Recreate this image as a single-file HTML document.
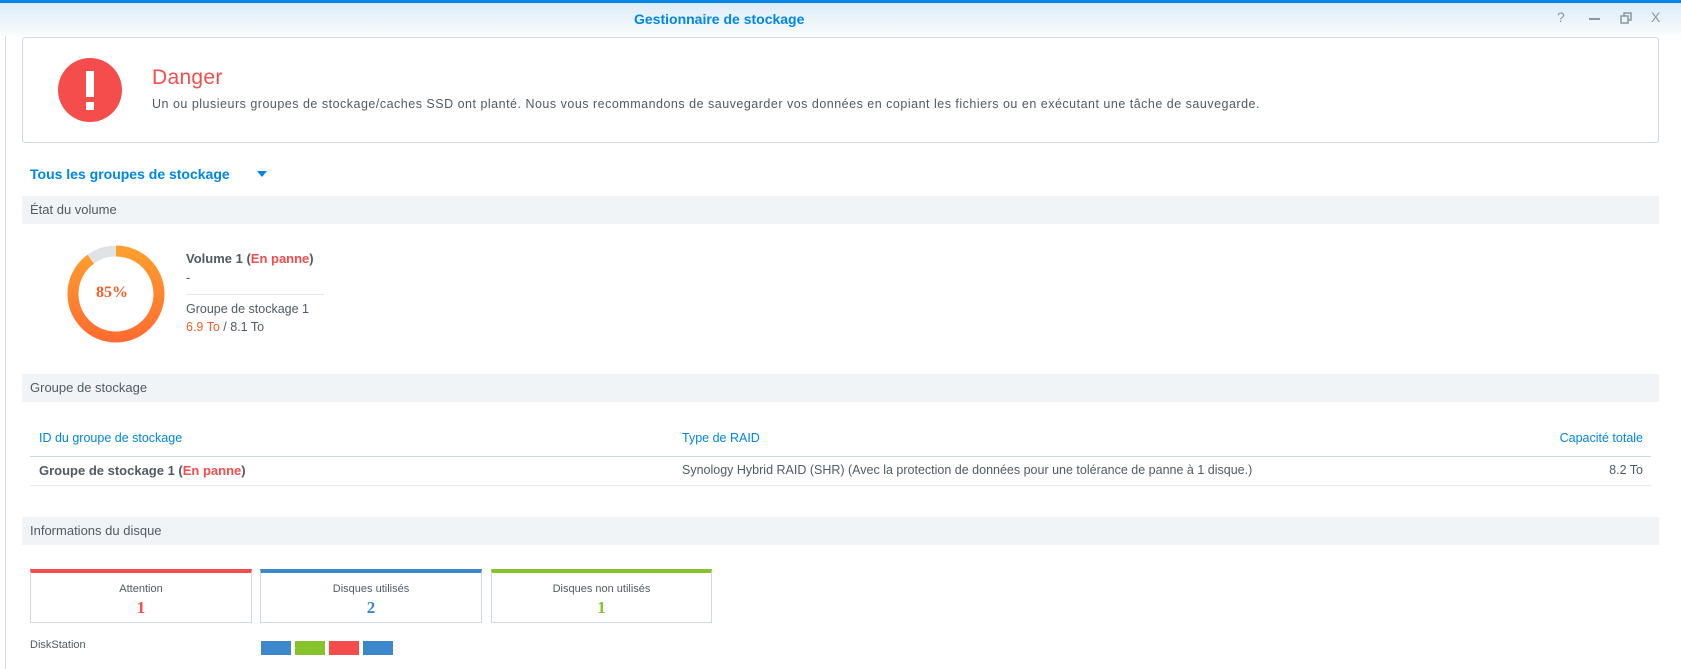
<!DOCTYPE html>
<html><head><meta charset="utf-8"><style>
*{margin:0;padding:0;box-sizing:border-box}
body{width:1681px;height:669px;overflow:hidden;background:#fff;font-family:"Liberation Sans",sans-serif;color:#505a64;position:relative;font-size:13px}
.a{position:absolute;white-space:nowrap}
.tb{position:absolute;left:0;top:0;width:1681px;height:36px;background:linear-gradient(#dcebf8,#fafcfe);border-top:3px solid #0086e5}
.sec{position:absolute;left:22px;width:1637px;height:28px;background:#f1f4f7;font-size:13px;line-height:28px;padding-left:8px;color:#505a64}
.card{position:absolute;top:569px;height:54px;border:1px solid #d0d9e2;text-align:center}
.card .l{font-size:11px;margin-top:10px;color:#505a64}
.card .n{font-family:"Liberation Serif",serif;font-weight:bold;font-size:17px;margin-top:3px}
.sq{position:absolute;top:641px;width:30px;height:14px}
</style></head><body>
<div class="tb"></div>
<div class="a" style="left:634px;top:11px;font-size:14px;font-weight:bold;color:#0086e5">Gestionnaire de stockage</div>
<div class="a" style="left:1557px;top:9px;font-size:14px;color:#8a96a0">?</div>
<div class="a" style="left:1589px;top:18px;width:11px;height:2px;background:#8a96a0"></div>
<svg class="a" style="left:1620px;top:12px" width="12" height="12"><rect x="1" y="4" width="7" height="7" fill="none" stroke="#8a96a0" stroke-width="1.5"/><path d="M4 4V1h7v7H8" fill="none" stroke="#8a96a0" stroke-width="1.5"/></svg>
<div class="a" style="left:1651px;top:9px;font-size:14px;color:#8a96a0">X</div>
<div class="a" style="left:5px;top:36px;width:1px;height:633px;background:#d5dbe1"></div>
<div class="a" style="left:22px;top:37px;width:1637px;height:106px;border:1px solid #d0d9e2;border-radius:3px"></div>
<div class="a" style="left:58px;top:58px;width:64px;height:64px;border-radius:50%;background:#f54c4c"></div>
<div class="a" style="left:86px;top:71px;width:8px;height:26px;background:#fff"></div>
<div class="a" style="left:86px;top:102px;width:8px;height:8px;background:#fff"></div>
<div class="a" style="left:152px;top:66px;font-size:21px;color:#f54c4c;letter-spacing:0.3px">Danger</div>
<div class="a" style="left:152px;top:97px;font-size:12.5px;color:#505a64;letter-spacing:0.5px">Un ou plusieurs groupes de stockage/caches SSD ont planté. Nous vous recommandons de sauvegarder vos données en copiant les fichiers ou en exécutant une tâche de sauvegarde.</div>
<div class="a" style="left:30px;top:166px;font-size:14px;font-weight:bold;color:#0086e5">Tous les groupes de stockage</div>
<div class="a" style="left:257px;top:171px;width:0;height:0;border-left:5px solid transparent;border-right:5px solid transparent;border-top:6px solid #0086e5"></div>
<div class="sec" style="top:196px">État du volume</div>
<svg class="a" style="left:66px;top:244px" width="100" height="100">
<defs><linearGradient id="g" gradientUnits="userSpaceOnUse" x1="50" y1="0" x2="50" y2="100"><stop offset="0" stop-color="#ffa22e"/><stop offset="1" stop-color="#ff6a30"/></linearGradient></defs>
<circle cx="50" cy="50" r="43" fill="none" stroke="#e0e3e6" stroke-width="11"/>
<path d="M50 7 A43 43 0 1 1 24.7 15.2" fill="none" stroke="url(#g)" stroke-width="11"/>
</svg>
<div class="a" style="left:96px;top:284px;font-family:'Liberation Serif',serif;font-weight:bold;font-size:16px;color:#f0602a">85%</div>
<div class="a" style="left:186px;top:251px;font-weight:bold;font-size:13px;color:#505a64">Volume 1 (<span style="color:#f54c4c">En panne</span>)</div>
<div class="a" style="left:186px;top:270px;font-size:13px">-</div>
<div class="a" style="left:186px;top:294px;width:138px;height:1px;background:#e3e7eb"></div>
<div class="a" style="left:186px;top:302px;font-size:12.5px">Groupe de stockage 1</div>
<div class="a" style="left:186px;top:320px;font-size:12.5px"><span style="color:#f0602a">6.9 To</span> / 8.1 To</div>
<div class="sec" style="top:374px">Groupe de stockage</div>
<div class="a" style="left:39px;top:431px;font-size:12.5px;color:#0086e5">ID du groupe de stockage</div>
<div class="a" style="left:682px;top:431px;font-size:12.5px;color:#0086e5">Type de RAID</div>
<div class="a" style="left:1555px;top:431px;font-size:12.5px;color:#0086e5;width:88px;text-align:right">Capacité totale</div>
<div class="a" style="left:30px;top:456px;width:1621px;height:1px;background:#d0d9e2"></div>
<div class="a" style="left:39px;top:463px;font-size:13px;font-weight:bold">Groupe de stockage 1 (<span style="color:#f54c4c">En panne</span>)</div>
<div class="a" style="left:682px;top:463px;font-size:12.5px">Synology Hybrid RAID (SHR) (Avec la protection de données pour une tolérance de panne à 1 disque.)</div>
<div class="a" style="left:1555px;top:463px;font-size:12.5px;width:88px;text-align:right">8.2 To</div>
<div class="a" style="left:30px;top:485px;width:1621px;height:1px;background:#e6eaee"></div>
<div class="sec" style="top:517px">Informations du disque</div>
<div class="card" style="left:30px;width:222px;border-top:4px solid #f54c4c"><div class="l">Attention</div><div class="n" style="color:#f54c4c">1</div></div>
<div class="card" style="left:260px;width:222px;border-top:4px solid #3d87cc"><div class="l">Disques utilisés</div><div class="n" style="color:#3d87cc">2</div></div>
<div class="card" style="left:491px;width:221px;border-top:4px solid #86c22a"><div class="l">Disques non utilisés</div><div class="n" style="color:#86c22a">1</div></div>
<div class="a" style="left:30px;top:639px;font-size:11px">DiskStation</div>
<div class="sq" style="left:261px;background:#3d87cc"></div>
<div class="sq" style="left:295px;background:#86c22a"></div>
<div class="sq" style="left:329px;background:#f54c4c"></div>
<div class="sq" style="left:363px;background:#3d87cc"></div>
</body></html>
